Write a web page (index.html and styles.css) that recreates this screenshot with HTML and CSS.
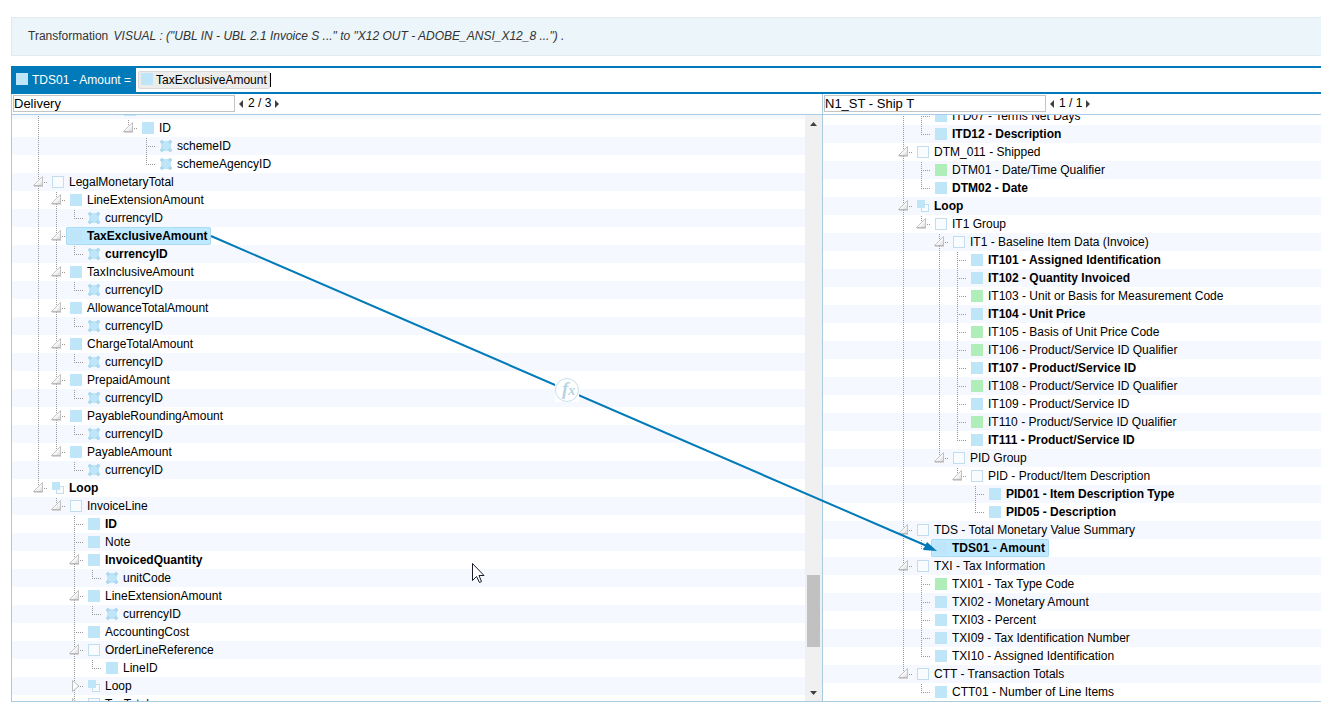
FILE: index.html
```html
<!DOCTYPE html>
<html lang="en">
<head>
<meta charset="utf-8">
<title>Transformation</title>
<link rel="stylesheet" href="styles.css">
</head>
<body>
<svg class="defs" aria-hidden="true">
  <defs>
    <linearGradient id="shade" x1="0" y1="0" x2="1" y2="1"><stop offset="0.5" stop-color="#fff"/><stop offset="1" stop-color="#d4d4d4"/></linearGradient>
    <symbol id="open" viewBox="0 0 18 18"><path d="M12.5 3.5V12.5H3.5Z" fill="url(#shade)" stroke="#c2c2c2" stroke-linejoin="round"/><path d="M4 13H13" stroke="#b0b0b0" stroke-width="1"/></symbol>
    <symbol id="shut" viewBox="0 0 18 18"><path d="M6.5 3.5L13 9L6.5 14.5Z" fill="url(#shade)" stroke="#bcbcbc" stroke-linejoin="round"/></symbol>
  </defs>
</svg>

<header class="banner">Transformation <em>VISUAL : ("UBL IN - UBL 2.1 Invoice S ..." to "X12 OUT - ADOBE_ANSI_X12_8 ...") .</em></header>

<main class="mapper">
  <div class="formula">
    <div class="target"><i class="icon field"></i><span>TDS01 - Amount =</span></div>
    <div class="expression"><span class="token"><i class="icon field"></i><span>TaxExclusiveAmount</span></span><span class="caret"></span></div>
  </div>

  <div class="panes">
    <section class="pane">
      <div class="search">
        <input type="text" value="Delivery" aria-label="Find in source">
        <button class="step" aria-label="Previous match"><svg width="4" height="8"><path d="M4 0V8L0 4Z"/></svg></button>
        <span>2 / 3</span>
        <button class="step" aria-label="Next match"><svg width="4" height="8"><path d="M0 0V8L4 4Z"/></svg></button>
      </div>
      <div class="view">
        <ul class="tree source">
          <li>
            <ul class="deep">
              <li class="bare">
                <div class="row"><span class="slot"></span><span class="node"><i class="icon field"></i></span></div>
                <ul>
                  <li><div class="row"><button class="toggle" aria-label="Collapse"><svg><use href="#open"/></svg></button><span class="node"><i class="icon field"></i>ID</span></div>
                    <ul>
                      <li><div class="row"><span class="slot"></span><span class="node"><i class="icon attr"></i>schemeID</span></div></li>
                      <li><div class="row"><span class="slot"></span><span class="node"><i class="icon attr"></i>schemeAgencyID</span></div></li>
                    </ul>
                  </li>
                </ul>
              </li>
            </ul>
          </li>
          <li><div class="row"><button class="toggle" aria-label="Collapse"><svg><use href="#open"/></svg></button><span class="node"><i class="icon group"></i>LegalMonetaryTotal</span></div>
            <ul>
              <li><div class="row"><button class="toggle" aria-label="Collapse"><svg><use href="#open"/></svg></button><span class="node"><i class="icon field"></i>LineExtensionAmount</span></div>
                <ul><li><div class="row"><span class="slot"></span><span class="node"><i class="icon attr"></i>currencyID</span></div></li></ul></li>
              <li><div class="row"><button class="toggle" aria-label="Collapse"><svg><use href="#open"/></svg></button><span class="node mapped selected"><i class="icon field"></i>TaxExclusiveAmount</span></div>
                <ul><li><div class="row"><span class="slot"></span><span class="node mapped"><i class="icon attr"></i>currencyID</span></div></li></ul></li>
              <li><div class="row"><button class="toggle" aria-label="Collapse"><svg><use href="#open"/></svg></button><span class="node"><i class="icon field"></i>TaxInclusiveAmount</span></div>
                <ul><li><div class="row"><span class="slot"></span><span class="node"><i class="icon attr"></i>currencyID</span></div></li></ul></li>
              <li><div class="row"><button class="toggle" aria-label="Collapse"><svg><use href="#open"/></svg></button><span class="node"><i class="icon field"></i>AllowanceTotalAmount</span></div>
                <ul><li><div class="row"><span class="slot"></span><span class="node"><i class="icon attr"></i>currencyID</span></div></li></ul></li>
              <li><div class="row"><button class="toggle" aria-label="Collapse"><svg><use href="#open"/></svg></button><span class="node"><i class="icon field"></i>ChargeTotalAmount</span></div>
                <ul><li><div class="row"><span class="slot"></span><span class="node"><i class="icon attr"></i>currencyID</span></div></li></ul></li>
              <li><div class="row"><button class="toggle" aria-label="Collapse"><svg><use href="#open"/></svg></button><span class="node"><i class="icon field"></i>PrepaidAmount</span></div>
                <ul><li><div class="row"><span class="slot"></span><span class="node"><i class="icon attr"></i>currencyID</span></div></li></ul></li>
              <li><div class="row"><button class="toggle" aria-label="Collapse"><svg><use href="#open"/></svg></button><span class="node"><i class="icon field"></i>PayableRoundingAmount</span></div>
                <ul><li><div class="row"><span class="slot"></span><span class="node"><i class="icon attr"></i>currencyID</span></div></li></ul></li>
              <li><div class="row"><button class="toggle" aria-label="Collapse"><svg><use href="#open"/></svg></button><span class="node"><i class="icon field"></i>PayableAmount</span></div>
                <ul><li><div class="row"><span class="slot"></span><span class="node"><i class="icon attr"></i>currencyID</span></div></li></ul></li>
            </ul>
          </li>
          <li><div class="row"><button class="toggle" aria-label="Collapse"><svg><use href="#open"/></svg></button><span class="node mapped"><i class="icon loop"></i>Loop</span></div>
            <ul>
              <li><div class="row"><button class="toggle" aria-label="Collapse"><svg><use href="#open"/></svg></button><span class="node"><i class="icon group"></i>InvoiceLine</span></div>
                <ul>
                  <li><div class="row"><span class="slot"></span><span class="node mapped"><i class="icon field"></i>ID</span></div></li>
                  <li><div class="row"><span class="slot"></span><span class="node"><i class="icon field"></i>Note</span></div></li>
                  <li><div class="row"><button class="toggle" aria-label="Collapse"><svg><use href="#open"/></svg></button><span class="node mapped"><i class="icon field"></i>InvoicedQuantity</span></div>
                    <ul><li><div class="row"><span class="slot"></span><span class="node"><i class="icon attr"></i>unitCode</span></div></li></ul></li>
                  <li><div class="row"><button class="toggle" aria-label="Collapse"><svg><use href="#open"/></svg></button><span class="node"><i class="icon field"></i>LineExtensionAmount</span></div>
                    <ul><li><div class="row"><span class="slot"></span><span class="node"><i class="icon attr"></i>currencyID</span></div></li></ul></li>
                  <li><div class="row"><span class="slot"></span><span class="node"><i class="icon field"></i>AccountingCost</span></div></li>
                  <li><div class="row"><button class="toggle" aria-label="Collapse"><svg><use href="#open"/></svg></button><span class="node"><i class="icon group"></i>OrderLineReference</span></div>
                    <ul><li><div class="row"><span class="slot"></span><span class="node"><i class="icon field"></i>LineID</span></div></li></ul></li>
                  <li><div class="row"><button class="toggle" aria-label="Expand"><svg><use href="#shut"/></svg></button><span class="node"><i class="icon loop"></i>Loop</span></div></li>
                  <li><div class="row"><button class="toggle" aria-label="Expand"><svg><use href="#shut"/></svg></button><span class="node"><i class="icon group"></i>TaxTotal</span></div></li>
                </ul>
              </li>
            </ul>
          </li>
        </ul>
        <div class="scrollbar">
          <button class="arrow" aria-label="Scroll up"><svg width="7" height="4"><path d="M0 4H7L3.5 0Z"/></svg></button>
          <div class="before"></div>
          <div class="thumb"></div>
          <div class="after"></div>
          <button class="arrow" aria-label="Scroll down"><svg width="7" height="4"><path d="M0 0H7L3.5 4Z"/></svg></button>
        </div>
      </div>
    </section>

    <section class="pane">
      <div class="search">
        <input type="text" value="N1_ST - Ship T" aria-label="Find in target">
        <button class="step" aria-label="Previous match"><svg width="4" height="8"><path d="M4 0V8L0 4Z"/></svg></button>
        <span>1 / 1</span>
        <button class="step" aria-label="Next match"><svg width="4" height="8"><path d="M0 0V8L4 4Z"/></svg></button>
      </div>
      <div class="view">
        <ul class="tree destination">
          <li>
            <ul>
              <li><div class="row"><span class="slot"></span><span class="node"><i class="icon field"></i>ITD07 - Terms Net Days</span></div></li>
              <li><div class="row"><span class="slot"></span><span class="node mapped"><i class="icon field"></i>ITD12 - Description</span></div></li>
            </ul>
          </li>
          <li><div class="row"><button class="toggle" aria-label="Collapse"><svg><use href="#open"/></svg></button><span class="node"><i class="icon group"></i>DTM_011 - Shipped</span></div>
            <ul>
              <li><div class="row"><span class="slot"></span><span class="node"><i class="icon code"></i>DTM01 - Date/Time Qualifier</span></div></li>
              <li><div class="row"><span class="slot"></span><span class="node mapped"><i class="icon field"></i>DTM02 - Date</span></div></li>
            </ul>
          </li>
          <li><div class="row"><button class="toggle" aria-label="Collapse"><svg><use href="#open"/></svg></button><span class="node mapped"><i class="icon loop"></i>Loop</span></div>
            <ul>
              <li><div class="row"><button class="toggle" aria-label="Collapse"><svg><use href="#open"/></svg></button><span class="node"><i class="icon group"></i>IT1 Group</span></div>
                <ul>
                  <li><div class="row"><button class="toggle" aria-label="Collapse"><svg><use href="#open"/></svg></button><span class="node"><i class="icon group"></i>IT1 - Baseline Item Data (Invoice)</span></div>
                    <ul>
                      <li><div class="row"><span class="slot"></span><span class="node mapped"><i class="icon field"></i>IT101 - Assigned Identification</span></div></li>
                      <li><div class="row"><span class="slot"></span><span class="node mapped"><i class="icon field"></i>IT102 - Quantity Invoiced</span></div></li>
                      <li><div class="row"><span class="slot"></span><span class="node"><i class="icon code"></i>IT103 - Unit or Basis for Measurement Code</span></div></li>
                      <li><div class="row"><span class="slot"></span><span class="node mapped"><i class="icon field"></i>IT104 - Unit Price</span></div></li>
                      <li><div class="row"><span class="slot"></span><span class="node"><i class="icon code"></i>IT105 - Basis of Unit Price Code</span></div></li>
                      <li><div class="row"><span class="slot"></span><span class="node"><i class="icon code"></i>IT106 - Product/Service ID Qualifier</span></div></li>
                      <li><div class="row"><span class="slot"></span><span class="node mapped"><i class="icon field"></i>IT107 - Product/Service ID</span></div></li>
                      <li><div class="row"><span class="slot"></span><span class="node"><i class="icon code"></i>IT108 - Product/Service ID Qualifier</span></div></li>
                      <li><div class="row"><span class="slot"></span><span class="node"><i class="icon field"></i>IT109 - Product/Service ID</span></div></li>
                      <li><div class="row"><span class="slot"></span><span class="node"><i class="icon code"></i>IT110 - Product/Service ID Qualifier</span></div></li>
                      <li><div class="row"><span class="slot"></span><span class="node mapped"><i class="icon field"></i>IT111 - Product/Service ID</span></div></li>
                    </ul>
                  </li>
                  <li><div class="row"><button class="toggle" aria-label="Collapse"><svg><use href="#open"/></svg></button><span class="node"><i class="icon group"></i>PID Group</span></div>
                    <ul>
                      <li><div class="row"><button class="toggle" aria-label="Collapse"><svg><use href="#open"/></svg></button><span class="node"><i class="icon group"></i>PID - Product/Item Description</span></div>
                        <ul>
                          <li><div class="row"><span class="slot"></span><span class="node mapped"><i class="icon field"></i>PID01 - Item Description Type</span></div></li>
                          <li><div class="row"><span class="slot"></span><span class="node mapped"><i class="icon field"></i>PID05 - Description</span></div></li>
                        </ul>
                      </li>
                    </ul>
                  </li>
                </ul>
              </li>
            </ul>
          </li>
          <li><div class="row"><button class="toggle" aria-label="Collapse"><svg><use href="#open"/></svg></button><span class="node"><i class="icon group"></i>TDS - Total Monetary Value Summary</span></div>
            <ul><li><div class="row"><span class="slot"></span><span class="node mapped selected"><i class="icon field"></i>TDS01 - Amount</span></div></li></ul></li>
          <li><div class="row"><button class="toggle" aria-label="Collapse"><svg><use href="#open"/></svg></button><span class="node"><i class="icon group"></i>TXI - Tax Information</span></div>
            <ul>
              <li><div class="row"><span class="slot"></span><span class="node"><i class="icon code"></i>TXI01 - Tax Type Code</span></div></li>
              <li><div class="row"><span class="slot"></span><span class="node"><i class="icon field"></i>TXI02 - Monetary Amount</span></div></li>
              <li><div class="row"><span class="slot"></span><span class="node"><i class="icon field"></i>TXI03 - Percent</span></div></li>
              <li><div class="row"><span class="slot"></span><span class="node"><i class="icon field"></i>TXI09 - Tax Identification Number</span></div></li>
              <li><div class="row"><span class="slot"></span><span class="node"><i class="icon field"></i>TXI10 - Assigned Identification</span></div></li>
            </ul>
          </li>
          <li><div class="row"><button class="toggle" aria-label="Collapse"><svg><use href="#open"/></svg></button><span class="node"><i class="icon group"></i>CTT - Transaction Totals</span></div>
            <ul><li><div class="row"><span class="slot"></span><span class="node"><i class="icon field"></i>CTT01 - Number of Line Items</span></div></li></ul></li>
        </ul>
      </div>
    </section>

    <svg class="links" width="1310" height="608" viewBox="0 0 1310 608">
      <path d="M200 142L916 452" fill="none" stroke="#007ab8" stroke-width="2"/>
      <path d="M926 457L912 456L916 448Z" fill="#007ab8"/>
      <rect x="544" y="284" width="24" height="24" fill="#fff"/>
      <circle cx="556" cy="296" r="11.500" fill="#fff" stroke="#c3dfeb"/>
      <text class="fx" x="551" y="301">f<tspan class="arg">x</tspan></text>
      <path d="M461.500 469.500V486.500L465.500 482.500L468.500 488.500L470.500 487.500L468 481.500H473Z" fill="#fff" stroke="#1a1a2a"/>
    </svg>
  </div>
</main>
</body>
</html>
```
FILE: styles.css
```css
* { box-sizing: border-box; }

body {
  margin: 0;
  height: 100vh;
  padding: 17px 0 4px 11px;
  display: flex;
  flex-direction: column;
  gap: 10px;
  overflow: hidden;
  background: #fff;
  color: #000;
  font: 12px/18px "Liberation Sans", Arial, sans-serif;
}

.defs { position: absolute; width: 0; height: 0; }

ul { list-style: none; margin: 0; padding: 0; }

button { border: 0; padding: 0; background: none; display: block; }

.banner {
  border: 1px solid #dfebf0;
  border-right: 0;
  background: #ecf5f9;
  padding: 10px 16px;
  line-height: 17px;
  color: #333;
}
.banner em { margin-left: 2px; }

.mapper {
  flex: 1;
  min-height: 0;
  display: flex;
  flex-direction: column;
}

/* Formula bar */
.formula {
  display: flex;
  height: 28px;
  border: solid #007ab8;
  border-width: 2px 0;
}
.target {
  display: flex;
  align-items: center;
  gap: 4px;
  padding: 0 5px;
  background: #007ab8;
  color: #fff;
}
.target .icon { margin-bottom: 3px; }
.expression {
  display: flex;
  align-items: center;
  padding-left: 2px;
}
.token {
  display: flex;
  align-items: center;
  gap: 3px;
  height: 18px;
  padding: 0 2px;
  border: 1px solid #d9d9d9;
  border-radius: 2px;
  background: #ececec;
}
.token .icon { margin-bottom: 3px; }
.caret { width: 1px; height: 14px; background: #000; }

/* Panes */
.panes {
  position: relative;
  flex: 1;
  min-height: 0;
  display: grid;
  grid-template-columns: minmax(0, 811fr) minmax(0, 499fr);
}
.pane {
  display: flex;
  flex-direction: column;
  min-height: 0;
  border: solid #a9cbe0;
  border-width: 0 0 1px 1px;
}
.search {
  display: flex;
  align-items: center;
  gap: 4px;
  padding: 1px 1px 2px;
  border-bottom: 1px solid #a9cbe8;
}
.search input {
  width: 222px;
  height: 17px;
  margin: 0;
  padding: 0;
  border: 1px solid #c4c4c4;
  font: 13px/15px "Liberation Sans", Arial, sans-serif;
  color: #000;
}
.search span { line-height: 17px; padding-left: 1px; }
.step svg, .arrow svg { display: block; fill: #404040; }
.view {
  flex: 1;
  min-height: 0;
  display: flex;
  overflow: hidden;
}

/* Trees */
.tree {
  flex: 1;
  min-width: 0;
  align-self: flex-start;
}
.tree ul { padding-left: 18px; }
.tree ul.deep { padding-left: 72px; }
.source {
  margin-top: -14px;
  padding-left: 18px;
  background: repeating-linear-gradient(#f5f9ff 0 18px, #fff 18px 36px);
}
.destination {
  margin-top: -8px;
  padding-left: 72px;
  background: repeating-linear-gradient(#fff 0 18px, #f5f9ff 18px 36px);
}
.tree li { position: relative; }
.tree li::before {
  content: "";
  position: absolute;
  left: 8px;
  top: 0;
  bottom: 0;
  width: 1px;
  background: repeating-linear-gradient(transparent 0 1px, #999 1px 2px);
}
.tree li:last-child::before { bottom: auto; height: 10px; }
.tree li.bare::before { display: none; }

.row { position: relative; display: flex; height: 18px; white-space: nowrap; }
.row::before {
  content: "";
  position: absolute;
  left: 8px;
  top: 9px;
  width: 9px;
  height: 1px;
  background: repeating-linear-gradient(90deg, #999 0 1px, transparent 1px 2px);
}
.slot, .toggle { flex: none; width: 18px; height: 18px; }
.toggle { position: relative; }
.toggle svg { display: block; width: 18px; height: 18px; }
.node {
  display: flex;
  align-items: center;
  gap: 5px;
  padding: 0 4px;
}
.mapped { font-weight: bold; }
.selected {
  border-radius: 2px;
  background: #bfe9ff;
  box-shadow: inset 0 0 0 1px #aaddf3;
}

/* Node icons */
.icon { flex: none; display: block; width: 12px; height: 12px; }
.field { background: #bfe5f8; }
.code { background: #b0eeb9; }
.group { border: 1px solid #c3dcee; background: #f9fcff; }
.loop {
  background:
    linear-gradient(#bfe5f8, #bfe5f8) 0 0 / 8px 8px no-repeat,
    linear-gradient(#f9fcff, #f9fcff) 5px 5px / 6px 6px no-repeat,
    linear-gradient(#c3dcee, #c3dcee) 4px 4px / 8px 8px no-repeat;
}
.attr {
  background:
    radial-gradient(circle at 2px 2px, #afdaf0 2px, transparent 2px),
    radial-gradient(circle at 10px 2px, #afdaf0 2px, transparent 2px),
    radial-gradient(circle at 2px 10px, #afdaf0 2px, transparent 2px),
    radial-gradient(circle at 10px 10px, #afdaf0 2px, transparent 2px),
    linear-gradient(#bfe5f8, #bfe5f8) 1px 1px / 10px 10px no-repeat;
}

/* Scrollbar */
.scrollbar {
  flex: none;
  width: 17px;
  display: flex;
  flex-direction: column;
  background: #f0f0f0;
}
.arrow { width: 17px; height: 17px; display: grid; place-items: center; }
.before { flex: 443; }
.thumb { flex: 72; margin: 0 2px; background: #c1c1c1; }
.after { flex: 37; }

/* Mapping link layer */
.links { position: absolute; left: 0; top: 0; pointer-events: none; }
.fx {
  font: italic bold 19px "Liberation Serif", "Times New Roman", serif;
  fill: #b5d5e4;
}
.arg { font-size: 14px; }
```
